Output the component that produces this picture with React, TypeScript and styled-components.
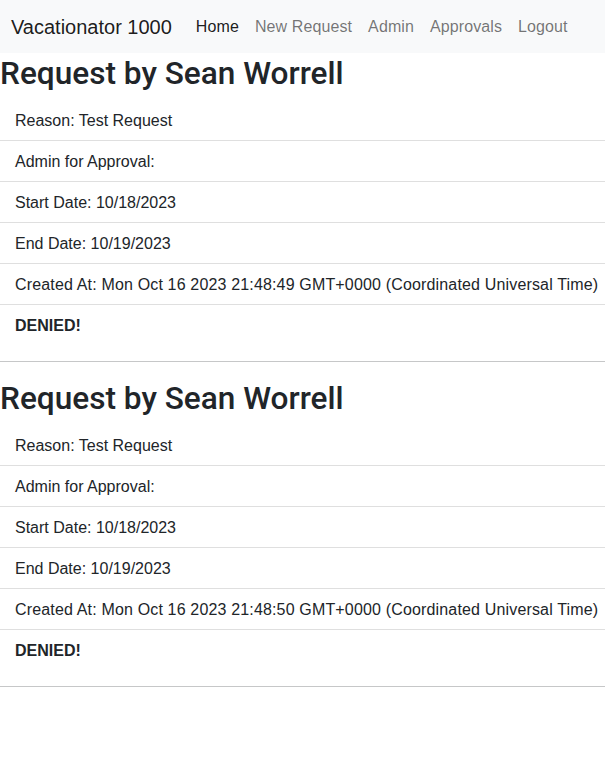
import React from "react";
import styled, { createGlobalStyle } from "styled-components";

const requests = [
  {
    id: 1,
    user: "Sean Worrell",
    reason: "Test Request",
    admin: "",
    start: "10/18/2023",
    end: "10/19/2023",
    created: "Mon Oct 16 2023 21:48:49 GMT+0000 (Coordinated Universal Time)",
  },
  {
    id: 2,
    user: "Sean Worrell",
    reason: "Test Request",
    admin: "",
    start: "10/18/2023",
    end: "10/19/2023",
    created: "Mon Oct 16 2023 21:48:50 GMT+0000 (Coordinated Universal Time)",
  },
];

const links = ["Home", "New Request", "Admin", "Approvals", "Logout"];

function App() {
  return (
    <>
      <GlobalStyle />
      <Navbar>
        <Brand>Vacationator 1000</Brand>
        <NavLinks>
          {links.map((l, i) => (
            <NavLink key={l} $active={i === 0}>
              {l}
            </NavLink>
          ))}
        </NavLinks>
      </Navbar>

      <main>
        {requests.map((r) => (
          <section key={r.id}>
            <Title>Request by {r.user}</Title>
            <List>
              <Item>Reason: {r.reason}</Item>
              <Item>Admin for Approval: {r.admin}</Item>
              <Item>Start Date: {r.start}</Item>
              <Item>End Date: {r.end}</Item>
              <Item $wide>Created At: {r.created}</Item>
              <Item $bold>DENIED!</Item>
            </List>
            <Divider />
          </section>
        ))}
      </main>
    </>
  );
}

const GlobalStyle = createGlobalStyle`
  body {
    margin: 0;
    background: #fff;
    color: #212529;
    font-family: "Liberation Sans", Arial, sans-serif;
    font-size: 16px;
    line-height: 1.5;
    overflow-x: hidden;
  }
`;

//? navbar
const Navbar = styled.nav`
  display: flex;
  align-items: center;
  height: 53px;
  padding: 0 11px;
  background-color: #f8f9fa;
`;

const Brand = styled.a`
  font-size: 20px;
  line-height: 30px;
  color: rgba(0, 0, 0, 0.9);
  margin-right: 16px;
  white-space: nowrap;
`;

const NavLinks = styled.div`
  display: flex;
`;

const NavLink = styled.a<{ $active?: boolean }>`
  padding: 8px;
  line-height: 24px;
  letter-spacing: 0.1px;
  color: ${(p) => (p.$active ? "rgba(0, 0, 0, 0.9)" : "rgba(0, 0, 0, 0.55)")};
  cursor: pointer;
  white-space: nowrap;
`;

//? request list
const Title = styled.h2`
  margin: 0 0 7px;
  padding-top: 2px;
  font-family: Roboto, "Liberation Sans", sans-serif;
  font-size: 31.6px;
  line-height: 38px;
  font-weight: 500;
  color: #212529;
`;

const List = styled.ul`
  list-style: none;
  margin: 0;
  padding: 0;
`;

const Item = styled.li<{ $bold?: boolean; $wide?: boolean }>`
  padding: 9px 15px 7px;
  line-height: 24px;
  white-space: nowrap;
  letter-spacing: ${(p) => (p.$wide ? "0.16px" : "0")};
  font-weight: ${(p) => (p.$bold ? 700 : 400)};
  border-bottom: 1px solid rgba(0, 0, 0, 0.125);

  &:last-child {
    border-bottom: 0;
  }
`;

const Divider = styled.hr`
  margin: 16px 0;
  border: 0;
  border-top: 1px solid #c6c7c8;
`;

export default App;
